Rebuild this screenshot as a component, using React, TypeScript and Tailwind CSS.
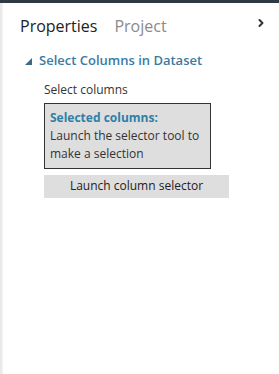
import { ChevronRight } from "lucide-react";

export default function App() {
  return (
    <div className="flex h-[374px] w-[279px] flex-col bg-white font-['Open_Sans',sans-serif] text-[#333]">
      <div className="h-[3px] bg-[#2d3a44]" />
      <div className="flex flex-1">
        <div className="w-[3px] bg-gradient-to-r from-[#e6e6e6] to-[#f4f4f4]" />
        <div className="flex-1">
          <div className="flex items-start justify-between pl-[17px] pr-[12px] pt-[12px]">
            <div className="flex gap-[17px] text-[16px] leading-[22px]">
              <span className="text-[#222]">Properties</span>
              <span className="text-[#8a8a8a]">Project</span>
            </div>
            <ChevronRight className="mt-[2px] h-[12px] w-[12px] text-[#333]" strokeWidth={4} />
          </div>
          <div className="mt-[14px] flex items-center pl-[22px] text-[13px] font-semibold text-[#3a7aa3]">
            <svg width="7" height="7" viewBox="0 0 7 7" className="mr-[7px] mt-[2px]">
              <polygon points="7,0 7,7 0,7" fill="#3a6a8a" />
            </svg>
            Select Columns in Dataset
          </div>
          <div className="pl-[41px] pt-[10px] text-[12px]">
            <div className="leading-[18px] text-[#333]">Select columns</div>
            <div className="mt-[4px] w-[167px] border border-[#333] bg-[#dedede] px-[5px] pb-[5px] pt-[5px] text-[12px] leading-[18px]">
              <div className="font-bold text-[#2f7fa8]">Selected columns:</div>
              <div className="text-[#333]">Launch the selector tool to make a selection</div>
            </div>
            <button className="mt-[6px] h-[23px] w-[185px] bg-[#dedede] text-[12px] text-[#222]">
              Launch column selector
            </button>
          </div>
        </div>
      </div>
    </div>
  );
}
